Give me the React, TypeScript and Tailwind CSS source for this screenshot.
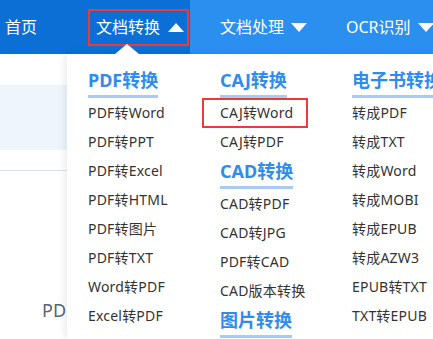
import React from "react";

type Col = { title: string; items: string[] }[];

const columns: Col[] = [
  [
    {
      title: "PDF转换",
      items: ["PDF转Word", "PDF转PPT", "PDF转Excel", "PDF转HTML", "PDF转图片", "PDF转TXT", "Word转PDF", "Excel转PDF"],
    },
  ],
  [
    { title: "CAJ转换", items: ["CAJ转Word", "CAJ转PDF"] },
    { title: "CAD转换", items: ["CAD转PDF", "CAD转JPG", "PDF转CAD", "CAD版本转换"] },
    { title: "图片转换", items: [] },
  ],
  [
    {
      title: "电子书转换",
      items: ["转成PDF", "转成TXT", "转成Word", "转成MOBI", "转成EPUB", "转成AZW3", "EPUB转TXT", "TXT转EPUB"],
    },
  ],
];

function Caret({ up }: { up?: boolean }) {
  return (
    <svg width="16" height="9" viewBox="0 0 16 9" className="shrink-0">
      {up ? <path d="M8 0 L16 9 L0 9 Z" fill="#fff" /> : <path d="M0 0 L16 0 L8 9 Z" fill="#fff" />}
    </svg>
  );
}

export default function App() {
  return (
    <div className="relative w-[433px] h-[339px] overflow-hidden bg-white font-['Noto_Sans','Noto_Sans_CJK_SC',sans-serif]">
      {/* nav */}
      <nav className="flex h-[54px] bg-[#2b8ff0] text-white text-[16px] whitespace-nowrap">
        <div className="flex shrink-0 items-center w-[190px] bg-[#0b6fd5]">
          <span className="ml-[5px]">首页</span>
          <div className="ml-auto mr-[1px] flex items-center gap-[8px] h-[37px] w-[101px] pl-[6px] border-2 border-[#ec3a3c]">
            <span>文档转换</span>
            <Caret up />
          </div>
        </div>
        <div className="flex shrink-0 items-center gap-[7px] ml-[30px]">
          <span>文档处理</span>
          <Caret />
        </div>
        <div className="flex shrink-0 items-center gap-[7px] ml-[39px]">
          <span>OCR识别</span>
          <Caret />
        </div>
      </nav>

      {/* page content under the menu (only its left edge shows) */}
      <div className="pt-[31px] w-[67px] overflow-hidden">
        <div className="h-[65px] bg-[#eef5fc]" />
        <div className="mt-[20px] border-t border-[#d8e2eb]" />
        <div className="pl-[42px] mt-[126px] whitespace-nowrap text-[18px] leading-[26px] text-[#5b6470]">PDF转Word</div>
      </div>

      {/* dropdown */}
      <div className="absolute left-[67px] top-[54px] right-0 bottom-0 bg-white shadow-[-3px_0_8px_rgba(0,0,0,0.07)]">
        <div className="absolute -top-[10px] left-[48px] w-0 h-0 border-l-[12px] border-r-[12px] border-b-[10px] border-l-transparent border-r-transparent border-b-white" />
        <div className="flex pl-[21px] pt-[11px] overflow-hidden h-full">
          {columns.map((col, ci) => (
            <div key={ci} className="w-[132px] shrink-0 flex flex-col">
              {col.map((g) => (
                <div key={g.title} className="flex flex-col">
                  <div className="self-start whitespace-nowrap h-[33px] leading-[30px] border-b-[3px] border-[#a9cbf3] text-[18px] font-bold text-[#2f8cec]">
                    {g.title}
                  </div>
                  {g.items.map((it) => (
                    <div key={it} className="relative whitespace-nowrap h-[29px] leading-[29px] text-[14px] tracking-[0.2px] text-[#333]">
                      {it}
                      {it === "CAJ转Word" && (
                        <div className="absolute -left-[18px] top-0 w-[106px] h-[30px] border-2 border-[#ec3a3c]" />
                      )}
                    </div>
                  ))}
                </div>
              ))}
            </div>
          ))}
        </div>
      </div>
    </div>
  );
}
